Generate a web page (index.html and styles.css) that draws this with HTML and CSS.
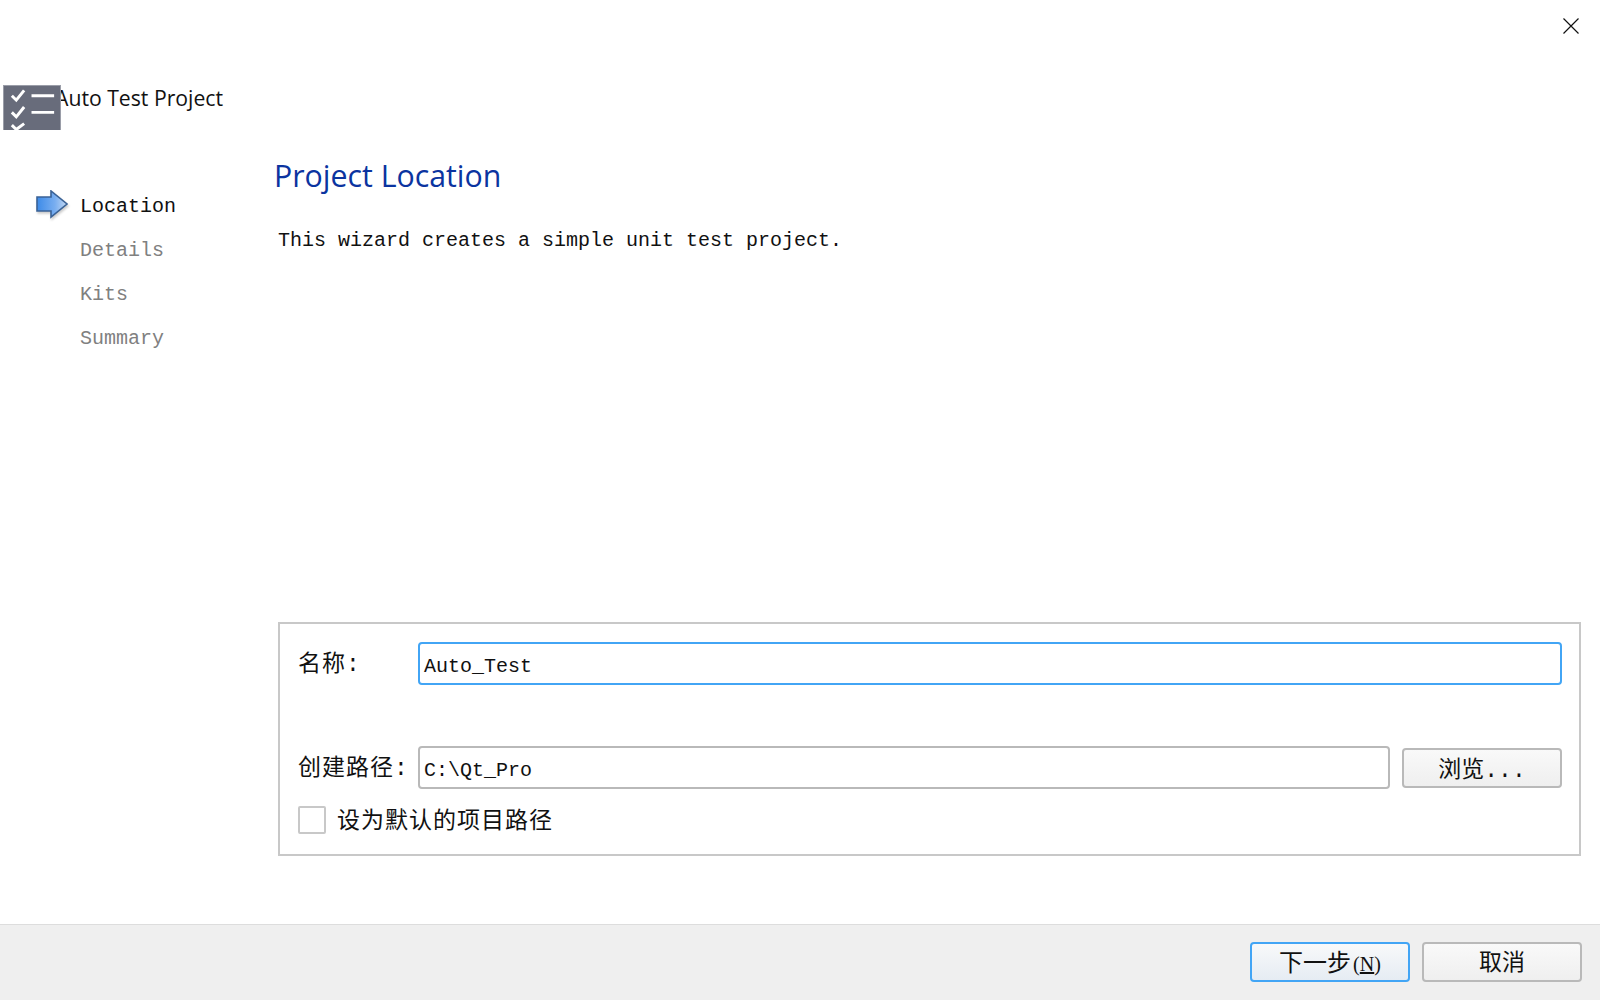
FILE: index.html
```html
<!DOCTYPE html>
<html lang="zh-CN">
<head>
<meta charset="utf-8">
<title>Auto Test Project</title>
<link rel="stylesheet" href="styles.css">
</head>
<body>
<div class="window">
  <div class="main">
    <div class="close-row">
      <svg class="close" width="18" height="18" viewBox="0 0 18 18"><path d="M1.5 1.5L16.5 16.5M16.5 1.5L1.5 16.5" stroke="#111" stroke-width="1.2" fill="none"/></svg>
    </div>
    <div class="title-row">
      <svg class="logo" width="58" height="45" viewBox="0 0 59 46" preserveAspectRatio="none">
        <rect x="0.500" y="0.500" width="58" height="46" fill="#686c7b" stroke="#9a9da8"/>
        <path d="M9 11l4.500 4.500 8-10M9 28l4.500 4.500 8-10M9 41l4.500 4.500 8-6" stroke="#fff" stroke-width="3" fill="none"/>
        <path d="M29 11h23M29 28h23" stroke="#fff" stroke-width="3" fill="none"/>
      </svg>
      <div class="title">Auto Test Project</div>
    </div>
    <div class="wizard">
      <ul class="steps">
        <li class="step current">
          <svg class="arrow" width="32" height="29" viewBox="0 0 32 29">
            <defs><linearGradient id="ag" x1="0" x2="1" y1="0" y2="0"><stop offset="0" stop-color="#3d8be8"/><stop offset="0.600" stop-color="#79aef0"/><stop offset="1" stop-color="#c3d8f2"/></linearGradient></defs>
            <path d="M1 7h14V1L31 14 15 27V21H1z" fill="url(#ag)" stroke="#3a6296" stroke-width="1.600"/>
          </svg>
          Location
        </li>
        <li class="step">Details</li>
        <li class="step">Kits</li>
        <li class="step">Summary</li>
      </ul>
      <div class="page">
        <h1 class="heading">Project Location</h1>
        <p class="intro">This wizard creates a simple unit test project.</p>
        <div class="group">
          <span class="label label-name">名称:</span>
          <div class="input focused">Auto_Test</div>
          <span class="label label-path">创建路径:</span>
          <div class="path-row">
            <div class="input">C:\Qt_Pro</div>
            <div class="btn browse">浏览...</div>
          </div>
          <div class="check-row">
            <span class="checkbox"></span>
            <span class="label">设为默认的项目路径</span>
          </div>
        </div>
      </div>
    </div>
  </div>
  <div class="footer">
    <div class="btn primary">下一步<span class="accel">(<u>N</u>)</span></div>
    <div class="btn">取消</div>
  </div>
</div>
</body>
</html>
```
FILE: styles.css
```css
* { box-sizing: border-box; }
html, body { margin: 0; background: #fff; }
.window {
  width: 1600px;
  height: 1000px;
  display: flex;
  flex-direction: column;
  font-family: "Liberation Mono", "Noto Sans CJK SC", monospace;
  font-size: 20px;
  color: #111;
  overflow: hidden;
}
.main { flex: 1; display: flex; flex-direction: column; min-height: 0; }
.close-row { display: flex; justify-content: flex-end; padding: 17px 20px 0 0; height: 85px; }
.title-row { display: flex; align-items: flex-start; padding-left: 3px; height: 45px; }
.logo { position: relative; z-index: 1; margin-right: -6px; flex: none; }
.title { font-family: "Open Sans", sans-serif; font-size: 21.2px; line-height: 25px; color: #111; }
.wizard { display: flex; flex: 1; }
.steps { list-style: none; margin: 0; padding: 55px 0 0 80px; width: 274px; flex: none; }
.step { height: 44px; line-height: 44px; color: #808080; position: relative; }
.step.current { color: #111; }
.arrow { position: absolute; left: -44px; top: 5px; filter: drop-shadow(1px 2px 1px rgba(0, 0, 0, 0.2)); }
.page { flex: 1; display: flex; flex-direction: column; min-width: 0; }
.heading { margin: 24px 0 0; font-family: "Open Sans", sans-serif; font-weight: 400; font-size: 30.3px; line-height: 44px; color: #0b34a0; }
.intro { margin: 30px 0 0 4px; height: 394px; line-height: 26px; }
.group {
  margin: 0 19px 0 4px;
  height: 234px;
  border: 2px solid #c8c8c8;
  padding: 18px 17px 0 18px;
  display: grid;
  grid-template-columns: 120px 1fr;
  grid-template-rows: 42px 62px 43px 1fr;
  align-items: start;
}
.label { font-size: 23px; letter-spacing: 1px; line-height: 46px; font-weight: 400; }
.label-path { grid-row: 3; white-space: nowrap; }
.label-name { grid-row: 1; }
.input {
  height: 43px;
  border: 2px solid #b9b9b9;
  border-radius: 4px;
  background: #fff;
  padding: 3px 0 0 4px;
  line-height: 39px;
}
.input.focused { border-color: #42a5f5; grid-row: 1; grid-column: 2; }
.path-row { grid-row: 3; grid-column: 2; display: flex; align-items: center; gap: 12px; }
.path-row .input { flex: 1; }
.check-row { grid-row: 4; grid-column: 1 / 3; display: flex; align-items: center; gap: 11px; margin-top: 15px; }
.check-row .label { line-height: 28px; padding-top: 4px; }
.checkbox { width: 28px; height: 28px; border: 2px solid #c8c8c8; border-radius: 2px; background: #fff; }
.btn {
  width: 160px;
  height: 40px;
  border: 2px solid #b9b9b9;
  border-radius: 4px;
  background: linear-gradient(#f9f9f9, #efefef);
  display: block;
  text-align: center;
  line-height: 40px;
  font-size: 23px;
}
.browse { flex: none; line-height: 42px; }
.accel { font-family: "Liberation Serif", serif; font-size: 20px; margin-left: 2px; }
.primary { border-color: #42a5f5; background: linear-gradient(#f8f9fa, #e6ecf3); font-size: 24px; }
.footer {
  height: 76px;
  background: #efefef;
  border-top: 1px solid #ddd;
  display: flex;
  justify-content: flex-end;
  gap: 12px;
  padding: 17px 18px 0 0;
}
```
